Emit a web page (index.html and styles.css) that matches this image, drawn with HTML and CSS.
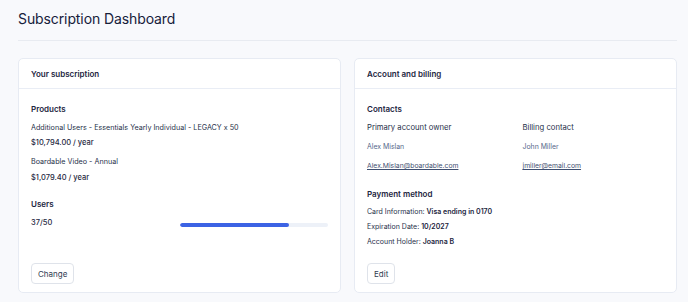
FILE: index.html
```html
<!DOCTYPE html>
<html lang="en">
<head>
<meta charset="utf-8">
<title>Subscription Dashboard</title>
<link rel="stylesheet" href="styles.css">
</head>
<body>
<div class="page">
  <header class="page-head">
    <h1 class="page-title">Subscription Dashboard</h1>
  </header>
  <main class="cards">
    <section class="card">
      <div class="card-head">Your subscription</div>
      <div class="card-body">
        <h2 class="sec-title">Products</h2>
        <div class="product">
          <div class="prod-name">Additional Users - Essentials Yearly Individual - LEGACY x 50</div>
          <div class="prod-price">$10,794.00 / year</div>
        </div>
        <div class="product">
          <div class="prod-name">Boardable Video - Annual</div>
          <div class="prod-price">$1,079.40 / year</div>
        </div>
        <h2 class="sec-title users-title">Users</h2>
        <div class="users-row">
          <span class="users-count">37/50</span>
          <div class="bar"><div class="bar-fill" style="width:74%"></div></div>
        </div>
        <button class="btn">Change</button>
      </div>
    </section>
    <section class="card">
      <div class="card-head">Account and billing</div>
      <div class="card-body">
        <h2 class="sec-title">Contacts</h2>
        <div class="contacts">
          <div class="contact">
            <div class="contact-role">Primary account owner</div>
            <div class="contact-name">Alex Mislan</div>
            <a class="contact-mail" href="#">Alex.Mislan@boardable.com</a>
          </div>
          <div class="contact">
            <div class="contact-role">Billing contact</div>
            <div class="contact-name">John Miller</div>
            <a class="contact-mail" href="#">jmiller@email.com</a>
          </div>
        </div>
        <h2 class="sec-title pay-title">Payment method</h2>
        <div class="pay-line">Card Information: <b>Visa ending in 0170</b></div>
        <div class="pay-line">Expiration Date: <b>10/2027</b></div>
        <div class="pay-line">Account Holder: <b>Joanna B</b></div>
        <button class="btn">Edit</button>
      </div>
    </section>
  </main>
</div>
</body>
</html>
```
FILE: styles.css
```css
* { box-sizing: border-box; }
html, body { margin: 0; padding: 0; }
body {
  background: #f8f9fc;
  font-family: Inter, "Noto Sans", "Liberation Sans", sans-serif;
  color: #1d2740;
}
.page {
  width: 677px;
  padding: 8px 0 0 18px;
}
.page-head {
  border-bottom: 1px solid #e8ebf1;
  padding-bottom: 10px;
}
.page-title {
  margin: 0;
  font-size: 14px;
  line-height: 22px;
  font-weight: 400;
  color: #16203a;
  letter-spacing: -0.1px;
}
.cards {
  margin-top: 17px;
  display: grid;
  grid-template-columns: 1fr 1fr;
  column-gap: 13px;
  align-items: stretch;
}
.card {
  background: #fff;
  border: 1px solid #e7ebf3;
  border-radius: 5px;
  display: flex;
  flex-direction: column;
}
.card-head {
  height: 30px;
  padding: 0 12px;
  display: flex;
  align-items: center;
  border-bottom: 1px solid #e9edf5;
  font-size: 8px;
  font-weight: 600;
  color: #1c2540;
}
.card-body {
  flex: 1;
  padding: 14px 12px 8px;
  display: flex;
  flex-direction: column;
}
.sec-title {
  margin: 0;
  font-size: 8px;
  line-height: 12px;
  font-weight: 600;
  color: #1c2540;
}
.product { margin-top: 7px; }
.prod-name, .prod-price {
  font-size: 7.2px;
  line-height: 12px;
  color: #27314a;
}
.prod-price { margin-top: 3px; font-size: 7.5px; font-weight: 500; color: #1f2942; }
.product + .product .prod-price { margin-top: 4px; }
.users-title { margin-top: 14px; }
.users-row {
  margin-top: 7px;
  display: flex;
  align-items: center;
  justify-content: space-between;
  font-size: 7.5px;
  line-height: 12px;
  font-weight: 500;
  color: #1f2942;
}
.bar {
  width: 50%;
  height: 4px;
  border-radius: 2px;
  background: #edf1f8;
  overflow: hidden;
  margin-top: 3px;
}
.bar-fill {
  height: 100%;
  background: #3c63e4;
  border-radius: 2px;
}
.btn {
  margin-top: auto;
  align-self: flex-start;
  height: 21px;
  padding: 0 6px;
  background: #fff;
  border: 1px solid #dfe3ea;
  border-radius: 4px;
  font-family: inherit;
  font-size: 8px;
  color: #323c52;
}
.contacts {
  margin-top: 7px;
  display: grid;
  grid-template-columns: 1fr 1fr;
  column-gap: 14px;
}
.contact { display: flex; flex-direction: column; }
.contact-role {
  font-size: 7.7px;
  line-height: 12px;
  color: #27314a;
}
.contact-name {
  margin-top: 7px;
  font-size: 6.9px;
  line-height: 12px;
  color: #56688a;
}
.contact-mail {
  margin-top: 7px;
  font-size: 6.8px;
  line-height: 12px;
  color: #3f4f70;
  text-decoration: underline;
}
.pay-title { margin-top: 16px; }
.pay-line {
  margin-top: 3px;
  font-size: 7px;
  line-height: 12px;
  color: #27314a;
}
.pay-title + .pay-line { margin-top: 6px; }
.pay-line b { font-weight: 600; color: #1c2540; }
.card-body .pay-line:last-of-type { margin-bottom: 15px; }
```
